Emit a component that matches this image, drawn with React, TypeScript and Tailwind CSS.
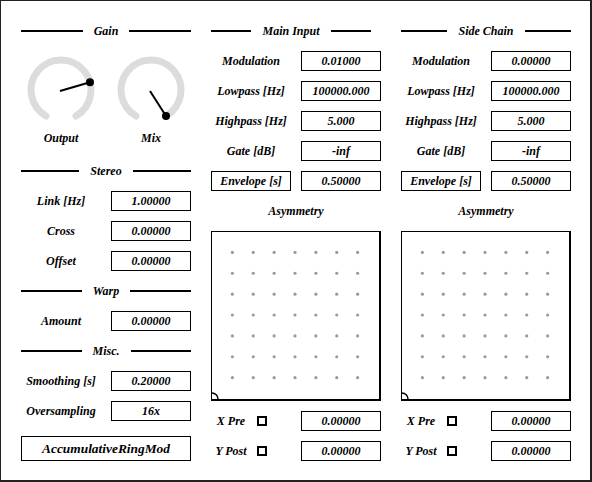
import React from 'react';

const font = { fontFamily: '"Liberation Serif", "Times New Roman", "DejaVu Serif", serif' };

// Section heading with rules on both sides
const Heading: React.FC<{ title: string; className?: string }> = ({ title, className }) => (
  <div className={`flex items-center h-5 ${className ?? ''}`}>
    <div className="flex-1 h-[2px] bg-black" />
    <span className="px-[11px] leading-none">{title}</span>
    <div className="flex-1 h-[2px] bg-black" />
  </div>
);

const ValueBox: React.FC<{ value: string }> = ({ value }) => (
  <div className="w-[80px] h-5 border border-black flex items-center justify-center leading-none">
    {value}
  </div>
);

const Row: React.FC<{ label: string; value: string; boxed?: boolean }> = ({ label, value, boxed }) => (
  <div className="grid grid-cols-[80px_80px] gap-[10px] h-5">
    <div
      className={`h-5 flex items-center justify-center leading-none ${boxed ? 'border border-black' : ''}`}
    >
      {label}
    </div>
    <ValueBox value={value} />
  </div>
);

const Knob: React.FC<{ label: string; value: number }> = ({ label, value }) => {
  const cx = 40;
  const cy = 39;
  const r = 30;
  const a = ((-150 + 300 * value) * Math.PI) / 180;
  const px = cx + r * Math.sin(a);
  const py = cy - r * Math.cos(a);
  return (
    <div className="flex flex-col items-center">
      <svg width="80" height="74" viewBox="0 0 80 74">
        <path
          d="M25 64.98 A30 30 0 1 1 55 64.98"
          fill="none"
          stroke="#dcdcdc"
          strokeWidth="7"
          strokeLinecap="round"
        />
        <line x1={cx - 1} y1={cy + 1} x2={px} y2={py} stroke="black" strokeWidth="2" />
        <circle cx={px} cy={py} r="4" fill="black" />
      </svg>
      <div className="mt-[5px] leading-4">{label}</div>
    </div>
  );
};

const XYPad: React.FC = () => {
  const idx = [1, 2, 3, 4, 5, 6, 7];
  return (
    <div className="relative w-[170px] h-[170px] border-l border-t border-r-2 border-b-2 border-black overflow-hidden">
      <svg width="167" height="167" viewBox="0 0 167 167" className="block">
        {idx.map((i) =>
          idx.map((j) => (
            <circle
              key={`${i}-${j}`}
              cx={(i * 167) / 8 - 0.5}
              cy={(j * 167) / 8 - 0.5}
              r="1.6"
              fill="#9a9a9a"
            />
          ))
        )}
        <circle cx="0" cy="167" r="6" fill="none" stroke="black" strokeWidth="1.5" />
      </svg>
    </div>
  );
};

const CheckRow: React.FC<{ label: string; value: string }> = ({ label, value }) => (
  <div className="grid grid-cols-[80px_80px] gap-[10px] h-5">
    <div className="flex items-center h-5">
      <div className="w-[40px] text-center leading-none">{label}</div>
      <div className="ml-[6px] w-[10px] h-[10px] border-2 border-black" />
    </div>
    <ValueBox value={value} />
  </div>
);

const ChannelColumn: React.FC<{ title: string; modulation: string; headingClass?: string }> = ({
  title,
  modulation,
  headingClass,
}) => (
  <div className="w-[170px] flex flex-col gap-[10px]">
    <Heading title={title} className={headingClass} />
    <Row label="Modulation" value={modulation} />
    <Row label="Lowpass [Hz]" value="100000.000" />
    <Row label="Highpass [Hz]" value="5.000" />
    <Row label="Gate [dB]" value="-inf" />
    <Row label="Envelope [s]" value="0.50000" boxed />
    <div className="h-5 flex items-center justify-center leading-none">Asymmetry</div>
    <XYPad />
    <CheckRow label="X Pre" value="0.00000" />
    <CheckRow label="Y Post" value="0.00000" />
  </div>
);

export default function App() {
  return (
    <div
      style={font}
      className="font-['Liberation_Serif',serif] w-[592px] h-[482px] bg-white text-black text-[12px] font-bold italic border-l border-t border-r-2 border-b-2 border-[#222] pt-[20px] pl-[20px] flex gap-[20px]"
    >
      {/* Left column */}
      <div className="w-[170px] flex flex-col gap-[10px]">
        <Heading title="Gain" />
        <div className="h-[100px] grid grid-cols-[80px_80px] gap-[10px]">
          <Knob label="Output" value={0.75} />
          <Knob label="Mix" value={1} />
        </div>
        <Heading title="Stereo" />
        <Row label="Link [Hz]" value="1.00000" />
        <Row label="Cross" value="0.00000" />
        <Row label="Offset" value="0.00000" />
        <Heading title="Warp" />
        <Row label="Amount" value="0.00000" />
        <Heading title="Misc." />
        <Row label="Smoothing [s]" value="0.20000" />
        <Row label="Oversampling" value="16x" />
        <div className="mt-[5px] h-[25px] border border-black flex items-center justify-center text-[13.4px] leading-none">
          AccumulativeRingMod
        </div>
      </div>

      <ChannelColumn title="Main Input" modulation="0.01000" headingClass="pr-[10px]" />
      <ChannelColumn title="Side Chain" modulation="0.00000" />
    </div>
  );
}
